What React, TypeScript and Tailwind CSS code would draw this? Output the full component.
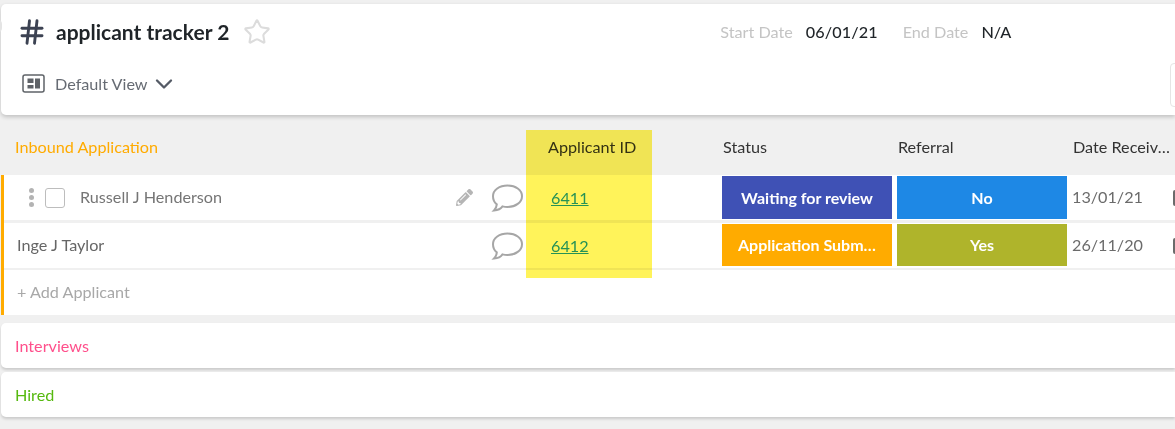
import { Star, ChevronDown, Hash } from 'lucide-react';
import { FaPencilAlt } from 'react-icons/fa';

const font = 'font-["Lato","Noto_Sans",sans-serif]';

function Comment() {
  return (
    <svg width="34" height="30" viewBox="0 0 34 30" fill="none" stroke="#a6a6a6" strokeWidth="2">
      <path d="M17.500 2.500c8 0 14.500 4.600 14.500 10.700S25.500 24 17.500 24c-1.800 0-3.400-.2-5-.6-1.500 2.200-4.500 3.800-8.500 4.100 1.500-1.500 2.600-3.600 2.800-6.100C4 19.200 3 16.500 3 13.200 3 7.100 9.500 2.500 17.500 2.500z" />
    </svg>
  );
}

function ViewIcon() {
  return (
    <svg width="24" height="20" viewBox="0 0 24 20" fill="none">
      <rect x="1" y="1" width="21" height="17" rx="2" stroke="#5f6368" strokeWidth="1.500" />
      <rect x="5.500" y="4.500" width="6" height="4.500" fill="#5f6368" />
      <rect x="5.500" y="11" width="6" height="3.500" fill="#5f6368" />
      <rect x="13" y="4.500" width="5" height="10" fill="#5f6368" />
    </svg>
  );
}

interface RowProps {
  name: string;
  id: string;
  status: string;
  statusColor: string;
  referral: string;
  referralColor: string;
  date: string;
  hovered?: boolean;
}

function Row({ name, id, status, statusColor, referral, referralColor, date, hovered }: RowProps) {
  const cellHeight = hovered ? 'h-[43px]' : 'mb-px h-[42px]';
  return (
    <div className="flex h-[45px] items-center overflow-hidden border-l-[3px] border-[#ffab00] bg-white">
      <div className="flex h-full w-[522px] shrink-0 items-center">
        {hovered ? (
          <>
            <div className="ml-[25px] flex w-[5px] flex-col gap-[2px]">
              <span className="h-[5px] w-[5px] rounded-full bg-[#b3b3b3]" />
              <span className="h-[5px] w-[5px] rounded-full bg-[#b3b3b3]" />
              <span className="h-[5px] w-[5px] rounded-full bg-[#b3b3b3]" />
            </div>
            <span className="ml-[11px] h-5 w-5 rounded-[3px] border border-[#bdbdbd]" />
            <span className="ml-[15px] text-[16.200px] text-[#757575]">{name}</span>
          </>
        ) : (
          <span className="ml-[13px] text-[16.200px] text-[#666666]">{name}</span>
        )}
        <div className="ml-auto mr-[2px] flex items-center">
          {hovered && <FaPencilAlt className="mr-[17px] h-[17px] w-[17px] text-[#b5b5b5]" />}
          <Comment />
        </div>
      </div>
      <div className="w-[196px] shrink-0 pl-[25px] pt-[2px]">
        <a className="text-[16.200px] text-[#2699f0] underline">{id}</a>
      </div>
      <div
        className={`flex w-[170px] shrink-0 items-center justify-center px-4 text-[16px] font-bold text-white ${cellHeight}`}
        style={{ backgroundColor: statusColor }}
      >
        <span className="truncate">{status}</span>
      </div>
      <div
        className={`ml-[5px] flex w-[170px] shrink-0 items-center justify-center text-[16px] font-bold text-white ${cellHeight}`}
        style={{ backgroundColor: referralColor }}
      >
        {referral}
      </div>
      <span className="ml-[5px] w-[101px] shrink-0 text-[16.200px] text-[#6b6b6b]">{date}</span>
      <span className="h-4 w-2 shrink-0 rounded-l-[2px] bg-[#6b6b6b]" />
    </div>
  );
}

function GroupCard({ title, color }: { title: string; color: string }) {
  return (
    <div className="ml-px flex h-[45px] items-center rounded-l-[5px] bg-white pl-[14px] pt-px shadow-[0_2px_3px_rgba(0,0,0,0.16)]">
      <span className="text-[16.200px]" style={{ color }}>
        {title}
      </span>
    </div>
  );
}

export default function App() {
  return (
    <div className={`relative h-[429px] w-[1175px] overflow-hidden bg-[#f0f0f0] pt-1 ${font}`}>
      {/* 헤더 카드 */}
      <div className="ml-px h-[111px] rounded-l-[5px] bg-white shadow-[0_2px_4px_rgba(0,0,0,0.2)]">
        <div className="flex h-[56px] items-center">
          <Hash className="ml-[16px] h-[30px] w-[30px] text-[#3c4252]" strokeWidth={2.300} />
          <h1 className="ml-[9px] text-[21px] font-bold text-[#1f2428]">applicant tracker 2</h1>
          <Star className="ml-[14px] h-[28px] w-[28px] text-[#dcdcdc]" strokeWidth={1.800} />
          <div className="ml-[449px] flex items-center text-[16.200px]">
            <span className="text-[#c4c4c4]">Start Date</span>
            <span className="ml-[13px] font-medium tracking-[0.1px] text-[#1f2428]">06/01/21</span>
            <span className="ml-[25px] text-[#c4c4c4]">End Date</span>
            <span className="ml-[13px] font-medium text-[#1f2428]">N/A</span>
          </div>
        </div>
        <div className="relative flex h-[48px] items-center pl-[21px]">
          <ViewIcon />
          <span className="ml-[9px] text-[16.200px] text-[#666b73]">Default View</span>
          <ChevronDown className="ml-[2px] h-[28px] w-[28px] text-[#555b66]" strokeWidth={2} />
          <span className="absolute left-[1169px] top-[3px] h-[44px] w-[20px] rounded-l-[4px] border border-[#e5e5e5]" />
        </div>
      </div>
      <span className="absolute left-[-8px] top-[19px] h-[14px] w-[10px] rounded-full bg-[#e4e4e4]" />

      {/* 그룹 헤더 */}
      <div className="flex h-[60px] items-center pt-[5px] text-[16.200px]">
        <span className="ml-[15px] w-[533px] text-[#ffab00]">Inbound Application</span>
        <span className="w-[175px] text-[#333333]">Applicant ID</span>
        <span className="w-[175px] text-[#333333]">Status</span>
        <span className="w-[175px] text-[#333333]">Referral</span>
        <span className="w-[100px] truncate text-[#333333]">Date Received</span>
      </div>

      <div className="ml-px flex flex-col">
        <Row
          hovered
          name="Russell J Henderson"
          id="6411"
          status="Waiting for review"
          statusColor="#3f51b5"
          referral="No"
          referralColor="#1e88e5"
          date="13/01/21"
        />
        <div className="h-[3px] border-l-[3px] border-[#ffab00] bg-[#f0f0f0]" />
        <Row
          name="Inge J Taylor"
          id="6412"
          status="Application Submitted"
          statusColor="#ffab00"
          referral="Yes"
          referralColor="#afb42b"
          date="26/11/20"
        />
        <div className="h-[2px] border-l-[3px] border-[#ffab00] bg-[#f0f0f0]" />
        <div className="flex h-[45px] items-center border-l-[3px] border-[#ffab00] bg-white pl-[13px] text-[16.200px] text-[#a8a8a8]">
          + Add Applicant
        </div>
      </div>

      <div className="mt-2 flex flex-col gap-1">
        <GroupCard title="Interviews" color="#ff4f8b" />
        <GroupCard title="Hired" color="#56b90f" />
      </div>

      {/* 노란 하이라이트 */}
      <div className="absolute left-[526px] top-[130px] h-[148px] w-[126px] bg-[#fff35a] mix-blend-multiply" />
    </div>
  );
}
